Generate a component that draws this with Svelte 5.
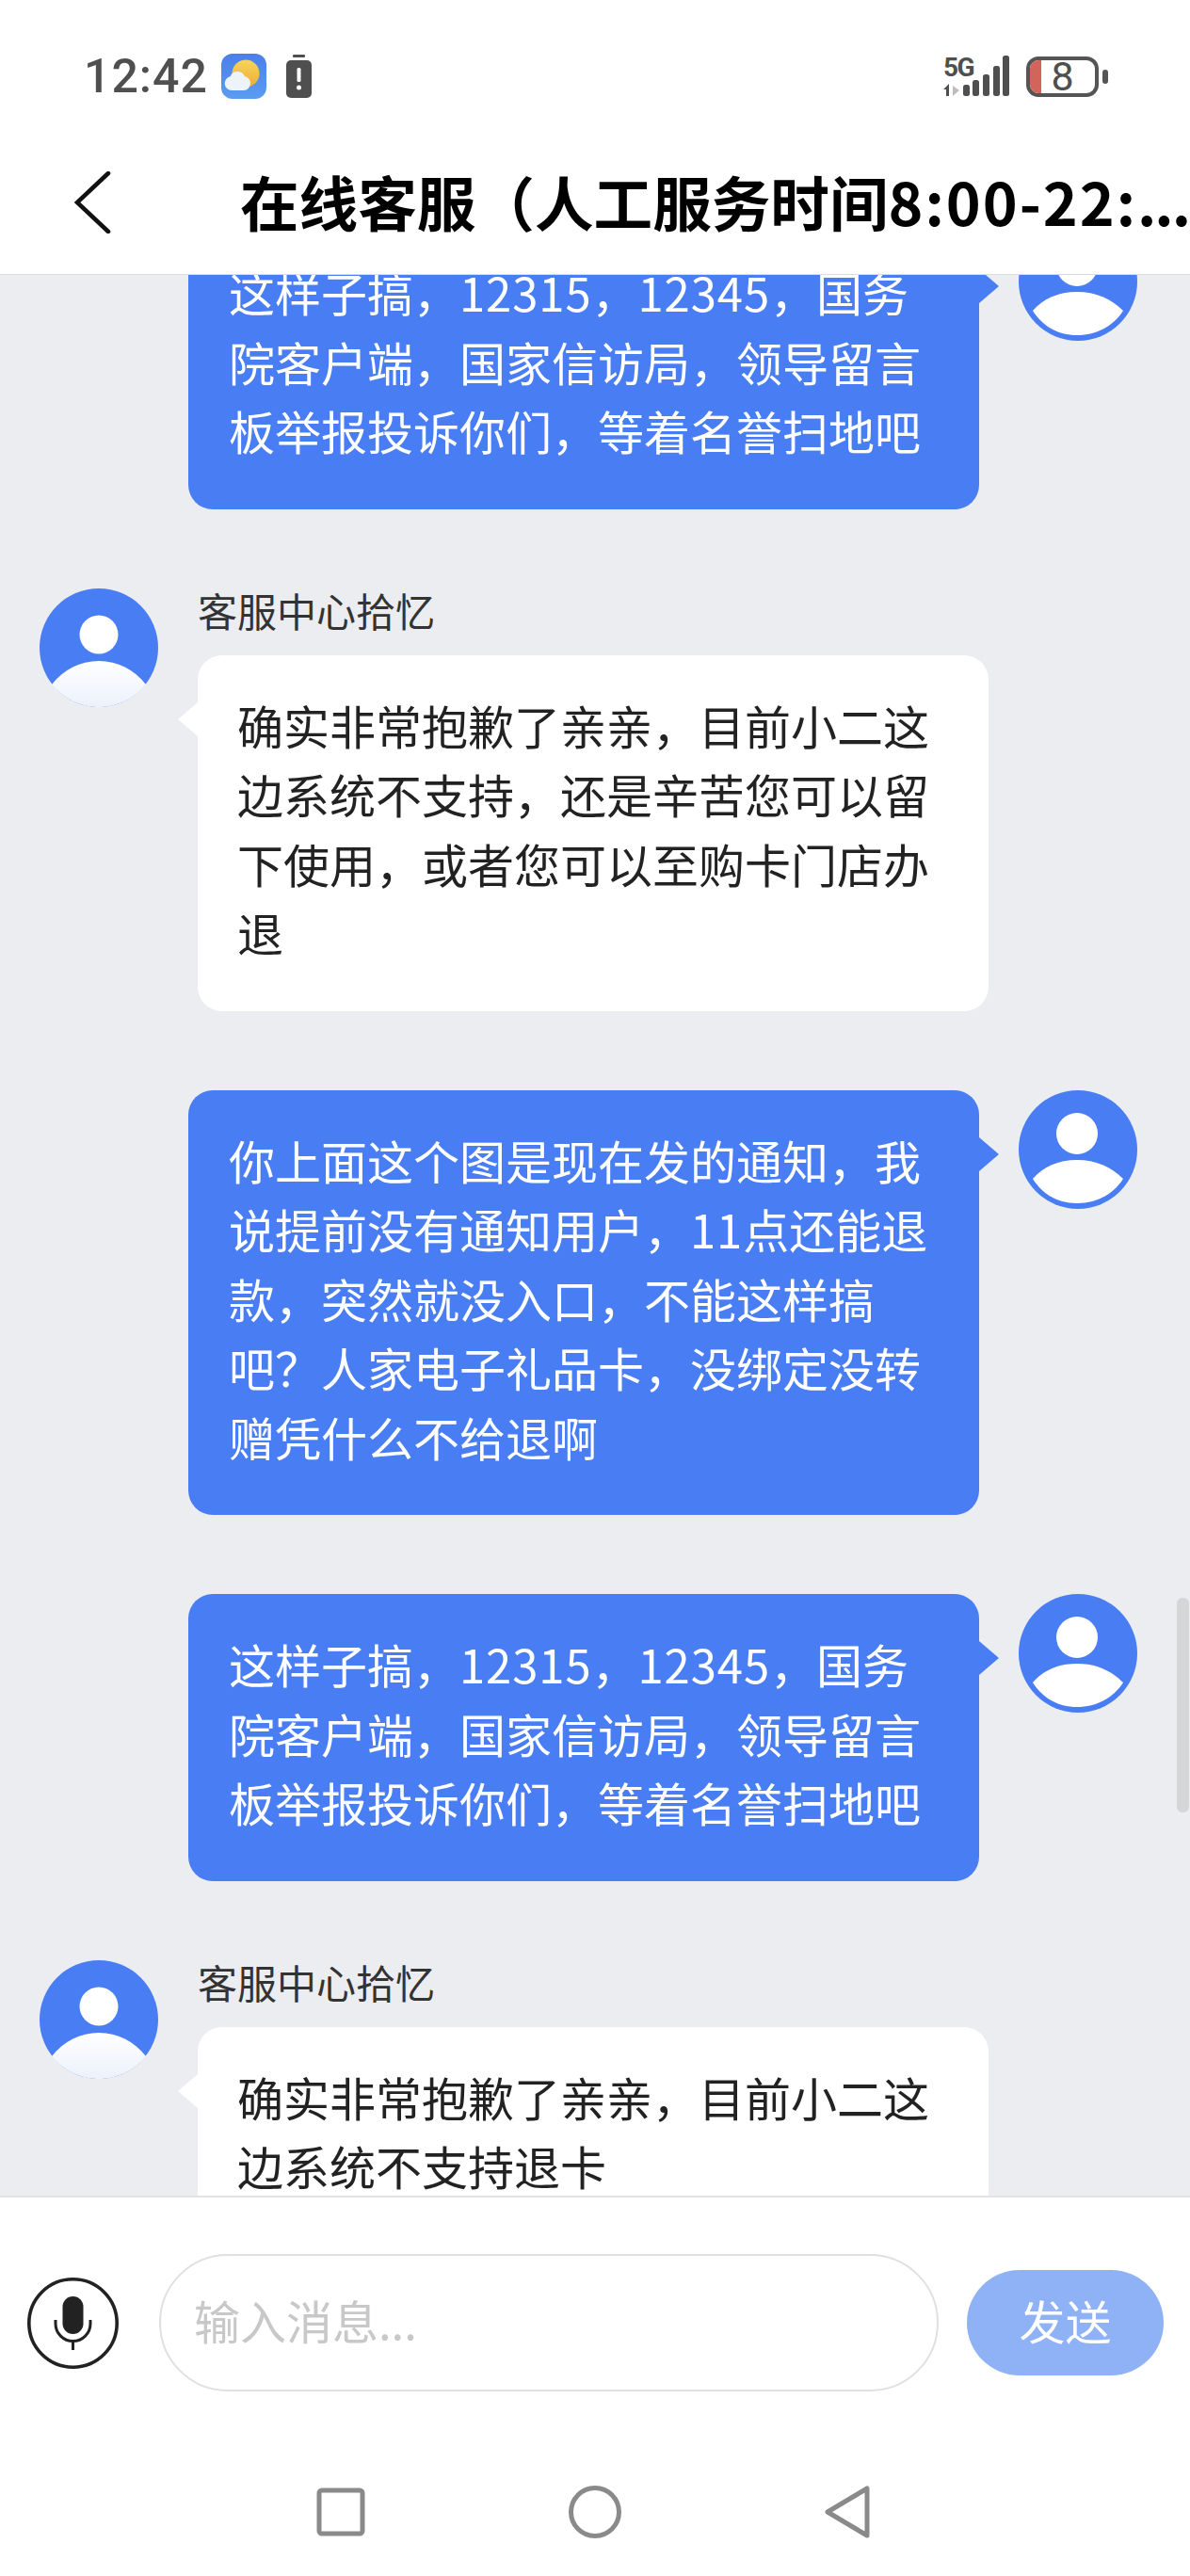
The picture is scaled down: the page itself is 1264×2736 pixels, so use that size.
<script>
  const agentName = "客服中心拾忆";

  const messages = [
    { from: "user", text: "这样子搞，12315，12345，国务院客户端，国家信访局，领导留言板举报投诉你们，等着名誉扫地吧" },
    { from: "agent", text: "确实非常抱歉了亲亲，目前小二这边系统不支持，还是辛苦您可以留下使用，或者您可以至购卡门店办退" },
    { from: "user", text: "你上面这个图是现在发的通知，我说提前没有通知用户，11点还能退款，突然就没入口，不能这样搞吧？人家电子礼品卡，没绑定没转赠凭什么不给退啊" },
    { from: "user", text: "这样子搞，12315，12345，国务院客户端，国家信访局，领导留言板举报投诉你们，等着名誉扫地吧" },
    { from: "agent", text: "确实非常抱歉了亲亲，目前小二这边系统不支持退卡" }
  ];

  // digits sit a little wider than the CJK font sets them
  function parts(text) {
    return text.split(/(\d+)/);
  }
</script>

{#snippet msgText(text)}
  {#each parts(text) as part, i}{#if i % 2}<span class="digits">{part}</span>{:else}{part}{/if}{/each}
{/snippet}

<div class="page">
  <div class="status">
    <div class="status-left">
      <span class="time">12:42</span>
      <svg class="weather" viewBox="0 0 48 48" width="48" height="48">
        <defs>
          <linearGradient id="sky" x1="0" y1="0" x2="0" y2="1">
            <stop offset="0" stop-color="#4a7fe8" />
            <stop offset="1" stop-color="#5b9cf2" />
          </linearGradient>
          <linearGradient id="sun" x1="0" y1="0" x2="0" y2="1">
            <stop offset="0" stop-color="#f8d45c" />
            <stop offset="1" stop-color="#f0ad32" />
          </linearGradient>
        </defs>
        <rect width="48" height="48" rx="12" fill="url(#sky)" />
        <circle cx="26" cy="21" r="14.5" fill="url(#sun)" />
        <path d="M11 39a7.5 7.5 0 0 1-1.5-14.8A8.5 8.5 0 0 1 25 24a7.5 7.5 0 0 1 6 7.6A7.5 7.5 0 0 1 24 39z" fill="#eef3f8" />
      </svg>
      <svg class="alert" viewBox="0 0 27 46" width="27" height="46">
        <rect x="7" y="0" width="13" height="3" rx="1" fill="#4f4f4f" />
        <rect x="0" y="6" width="27" height="40" rx="5" fill="#4f4f4f" />
        <rect x="11.5" y="14" width="4" height="15" rx="1.5" fill="#fff" />
        <circle cx="13.5" cy="35" r="2.5" fill="#fff" />
      </svg>
    </div>
    <div class="status-right">
      <div class="net">
        <span class="five-g">5G</span>
        <svg class="bars" viewBox="0 0 72 44" width="72" height="44">
          <path d="M0 37l6-6v13H3v-7z" fill="#4f4f4f" />
          <path d="M10 33l7 5-7 6z" fill="#bdbdbd" />
          <rect x="21" y="32" width="7" height="12" rx="2.5" fill="#4f4f4f" />
          <rect x="31" y="27" width="7" height="17" rx="2.5" fill="#4f4f4f" />
          <rect x="42" y="21" width="7" height="23" rx="2.5" fill="#4f4f4f" />
          <rect x="53" y="12" width="7" height="32" rx="2.5" fill="#4f4f4f" />
          <rect x="63" y="1" width="7" height="43" rx="2.5" fill="#4f4f4f" />
        </svg>
      </div>
      <div class="battery">
        <span class="battery-fill"></span>
        <span class="battery-num">8</span>
      </div>
      <span class="battery-nub"></span>
    </div>
  </div>

  <div class="header">
    <svg class="back" viewBox="0 0 40 66" width="40" height="66">
      <path d="M37 2L4 33l33 31" fill="none" stroke="#111" stroke-width="4.5" stroke-linecap="round" />
    </svg>
    <div class="title">在线客服（人工服务时间<span class="title-num">8:00-22:</span><span class="title-dots">...</span></div>
  </div>

  <div class="chat">
    <div class="list">
      {#each messages as msg}
        {#if msg.from === "user"}
          <div class="row user">
            <div class="bubble blue">{@render msgText(msg.text)}</div>
            <svg class="avatar" viewBox="0 0 126 126" width="126" height="126">
              <circle cx="63" cy="63" r="63" fill="#487df4" />
              <circle cx="62" cy="46" r="22" fill="#fff" />
              <path d="M15 94C26 81 42 74 62 74s36 7 49 20c-10 16-28 26-49 26s-37-10-47-26z" fill="#fff" />
            </svg>
          </div>
        {:else}
          <div class="row agent">
            <svg class="avatar" viewBox="0 0 126 126" width="126" height="126">
              <defs>
                <linearGradient id="body" x1="0" y1="0" x2="0" y2="1">
                  <stop offset="0" stop-color="#ffffff" />
                  <stop offset="1" stop-color="#ecf1fb" />
                </linearGradient>
              </defs>
              <circle cx="63" cy="63" r="63" fill="#487df4" />
              <circle cx="63" cy="49" r="20.5" fill="#fff" />
              <path d="M13 102C26 86 43 77 63 77s37 9 50 25A64 64 0 0 1 13 102z" fill="url(#body)" />
            </svg>
            <div class="agent-col">
              <div class="name">{agentName}</div>
              <div class="bubble white">{@render msgText(msg.text)}</div>
            </div>
          </div>
        {/if}
      {/each}
    </div>
    <span class="scrollbar"></span>
  </div>

  <div class="composer">
    <svg class="mic" viewBox="0 0 97 97" width="97" height="97">
      <circle cx="48.5" cy="48.5" r="46.7" fill="#fff" stroke="#222" stroke-width="3.6" />
      <rect x="37.5" y="20" width="22" height="40" rx="11" fill="#222" />
      <path d="M30 45v4a18.500 18.500 0 0 0 37 0v-4" fill="none" stroke="#222" stroke-width="3" />
      <path d="M48.500 67v10" stroke="#222" stroke-width="3" />
    </svg>
    <div class="input">输入消息...</div>
    <div class="send">发送</div>
  </div>

  <div class="nav">
    <svg viewBox="0 0 52 52" width="52" height="52">
      <rect x="3" y="3" width="46" height="46" rx="3" fill="none" stroke="#8a8a8a" stroke-width="5" />
    </svg>
    <svg viewBox="0 0 56 56" width="56" height="56">
      <circle cx="28" cy="28" r="25.500" fill="none" stroke="#8a8a8a" stroke-width="5" />
    </svg>
    <svg viewBox="0 0 48 56" width="48" height="56">
      <path d="M45 3v50L3 28z" fill="none" stroke="#8a8a8a" stroke-width="5" stroke-linejoin="round" />
    </svg>
  </div>
</div>

<style>
  :global(body) {
    margin: 0;
    background: #fff;
  }

  .page {
    width: 1264px;
    height: 2736px;
    display: flex;
    flex-direction: column;
    font-family: "Noto Sans CJK SC", "Noto Sans", sans-serif;
    overflow: hidden;
  }

  .status {
    height: 139px;
    flex: none;
    display: flex;
    justify-content: space-between;
    align-items: flex-start;
    padding: 57px 87px 0 89px;
    box-sizing: border-box;
    color: #4f4f4f;
  }

  .status-left {
    display: flex;
    align-items: center;
    gap: 14px;
    height: 48px;
  }

  .time {
    font-family: Roboto, sans-serif;
    font-weight: 500;
    font-size: 50px;
    line-height: 48px;
    letter-spacing: 1px;
  }

  .alert {
    margin-left: 7px;
  }

  .status-right {
    display: flex;
    align-items: center;
    height: 48px;
  }

  .net {
    position: relative;
    width: 88px;
    height: 46px;
  }

  .five-g {
    position: absolute;
    left: 0;
    top: -1px;
    font-family: Roboto, sans-serif;
    font-weight: 700;
    font-size: 28px;
    line-height: 30px;
    letter-spacing: -1.500px;
  }

  .bars {
    position: absolute;
    left: 0;
    bottom: 2px;
  }

  .battery {
    width: 77px;
    height: 43px;
    box-sizing: border-box;
    border: 4px solid #555;
    border-radius: 13px;
    position: relative;
    display: flex;
    align-items: center;
    justify-content: center;
  }

  .battery-fill {
    position: absolute;
    left: 0;
    top: 0;
    bottom: 0;
    width: 12px;
    border-radius: 9px 0 0 9px;
    background: #d1655c;
  }

  .battery-num {
    font-family: Roboto, sans-serif;
    font-size: 43px;
    line-height: 35px;
    color: #4f4f4f;
  }

  .battery-nub {
    width: 6px;
    height: 15px;
    border-radius: 3px;
    background: #555;
    margin-left: 4px;
  }

  .header {
    height: 153px;
    flex: none;
    display: flex;
    align-items: center;
    box-sizing: border-box;
    padding-left: 78px;
    background: #fff;
    border-bottom: 1px solid #dcdcdc;
  }

  .back {
    flex: none;
    margin-right: 137px;
  }

  .title {
    flex: 1;
    min-width: 0;
    padding-bottom: 6px;
    font-size: 62.600px;
    font-weight: 700;
    color: #000;
    white-space: nowrap;
  }

  .title-num {
    letter-spacing: 2px;
  }

  .title-dots {
    letter-spacing: -2px;
  }

  .chat {
    flex: 1;
    min-height: 0;
    position: relative;
    overflow: hidden;
    background: #ecedf0;
  }

  .list {
    display: flex;
    flex-direction: column;
    gap: 84px;
    margin-top: -56px;
  }

  .row {
    display: flex;
    align-items: flex-start;
    gap: 42px;
  }

  .row.user {
    justify-content: flex-end;
    padding-right: 56px;
  }

  .row.agent {
    padding-left: 42px;
  }

  .avatar {
    flex: none;
  }

  .name {
    font-size: 42px;
    line-height: 46px;
    color: #333;
    margin-bottom: 25px;
  }

  .bubble {
    width: 840px;
    box-sizing: border-box;
    padding: 37px 43px 47px;
    border-radius: 26px;
    font-size: 49px;
    line-height: 73.500px;
    position: relative;
  }

  .digits {
    letter-spacing: 0.900px;
  }

  .bubble::before {
    content: "";
    position: absolute;
    top: 50px;
    width: 0;
    height: 0;
    border-top: 18px solid transparent;
    border-bottom: 18px solid transparent;
  }

  .blue {
    background: #487df4;
    color: #fff;
  }

  .blue::before {
    right: -21px;
    border-left: 21px solid #487df4;
  }

  .white {
    background: #fff;
    color: #222;
    padding-left: 42px;
    padding-right: 44px;
  }

  .white::before {
    left: -21px;
    border-right: 21px solid #fff;
  }

  .scrollbar {
    position: absolute;
    right: 1px;
    top: 1405px;
    width: 13px;
    height: 228px;
    border-radius: 6px;
    background: #d5d6d8;
  }

  .composer {
    height: 265px;
    flex: none;
    display: flex;
    align-items: center;
    box-sizing: border-box;
    padding: 3px 28px 0 29px;
    background: #fff;
    border-top: 2px solid #e2e2e2;
  }

  .mic {
    flex: none;
    margin-right: 43px;
  }

  .input {
    width: 828px;
    height: 146px;
    flex: none;
    box-sizing: border-box;
    border: 2px solid #e0e0e0;
    border-radius: 73px;
    padding: 0 0 8px 35px;
    display: flex;
    align-items: center;
    font-size: 49px;
    color: #c8c8c8;
  }

  .send {
    width: 209px;
    height: 112px;
    flex: none;
    box-sizing: border-box;
    margin-left: 30px;
    padding-bottom: 8px;
    border-radius: 56px;
    background: #8fb2f7;
    color: #fff;
    font-size: 49px;
    display: flex;
    align-items: center;
    justify-content: center;
  }

  .nav {
    flex: none;
    height: 139px;
    display: flex;
    align-items: center;
    box-sizing: border-box;
    padding: 3px 0 0 336px;
    gap: 216px;
    background: #fff;
  }
</style>
